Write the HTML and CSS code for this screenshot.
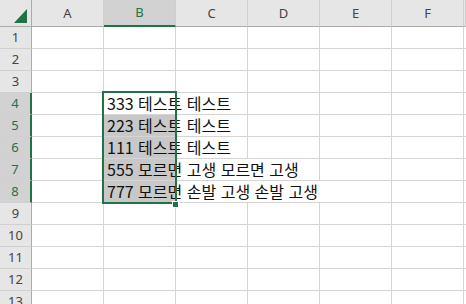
FILE: index.html
```html
<!DOCTYPE html>
<html lang="ko">
<head>
  <meta charset="UTF-8">
  <title>Sheet1</title>
  <link rel="stylesheet" href="styles.css">
</head>
<body>
  <div class="sheet">
    <div class="row head">
      <div class="corner">
        <svg width="13" height="14" viewBox="0 0 13 14"><polygon points="13,0 13,14 0,14" fill="#217346"/></svg>
      </div>
      <div class="col">A</div>
      <div class="col active">B</div>
      <div class="col">C</div>
      <div class="col">D</div>
      <div class="col">E</div>
      <div class="col">F</div>
      <div class="col"></div>
    </div>

    <div class="row">
      <div class="num">1</div>
      <div class="cell"></div><div class="cell"></div><div class="cell"></div><div class="cell"></div><div class="cell"></div><div class="cell"></div><div class="cell"></div>
    </div>
    <div class="row">
      <div class="num">2</div>
      <div class="cell"></div><div class="cell"></div><div class="cell"></div><div class="cell"></div><div class="cell"></div><div class="cell"></div><div class="cell"></div>
    </div>
    <div class="row">
      <div class="num">3</div>
      <div class="cell"></div><div class="cell"></div><div class="cell"></div><div class="cell"></div><div class="cell"></div><div class="cell"></div><div class="cell"></div>
    </div>
    <div class="row">
      <div class="num active">4</div>
      <div class="cell"></div>
      <div class="cell span-2">333 테스트 테스트</div>
      <div class="cell"></div><div class="cell"></div><div class="cell"></div><div class="cell"></div>
    </div>
    <div class="row">
      <div class="num active">5</div>
      <div class="cell"></div>
      <div class="cell span-2 sel">223 테스트 테스트</div>
      <div class="cell"></div><div class="cell"></div><div class="cell"></div><div class="cell"></div>
    </div>
    <div class="row">
      <div class="num active">6</div>
      <div class="cell"></div>
      <div class="cell span-2 sel">111 테스트 테스트</div>
      <div class="cell"></div><div class="cell"></div><div class="cell"></div><div class="cell"></div>
    </div>
    <div class="row">
      <div class="num active">7</div>
      <div class="cell"></div>
      <div class="cell span-3 sel">555 모르면 고생 모르면 고생</div>
      <div class="cell"></div><div class="cell"></div><div class="cell"></div>
    </div>
    <div class="row">
      <div class="num active">8</div>
      <div class="cell"></div>
      <div class="cell span-4 sel">777 모르면 손발 고생 손발 고생</div>
      <div class="cell"></div><div class="cell"></div>
    </div>
    <div class="row">
      <div class="num">9</div>
      <div class="cell"></div><div class="cell"></div><div class="cell"></div><div class="cell"></div><div class="cell"></div><div class="cell"></div><div class="cell"></div>
    </div>
    <div class="row">
      <div class="num">10</div>
      <div class="cell"></div><div class="cell"></div><div class="cell"></div><div class="cell"></div><div class="cell"></div><div class="cell"></div><div class="cell"></div>
    </div>
    <div class="row">
      <div class="num">11</div>
      <div class="cell"></div><div class="cell"></div><div class="cell"></div><div class="cell"></div><div class="cell"></div><div class="cell"></div><div class="cell"></div>
    </div>
    <div class="row">
      <div class="num">12</div>
      <div class="cell"></div><div class="cell"></div><div class="cell"></div><div class="cell"></div><div class="cell"></div><div class="cell"></div><div class="cell"></div>
    </div>
    <div class="row">
      <div class="num">13</div>
      <div class="cell"></div><div class="cell"></div><div class="cell"></div><div class="cell"></div><div class="cell"></div><div class="cell"></div><div class="cell"></div>
    </div>

    <!-- B4:B8 selection frame -->
    <div class="selection"><span class="handle"></span></div>
  </div>
</body>
</html>
```

FILE: styles.css
```css
* { box-sizing: border-box; }
html, body { overflow: hidden; }
body { margin: 0; background: #fff; font-family: 'Noto Sans', sans-serif; color: #000; }

.sheet { position: relative; }

.row {
  display: grid;
  grid-template-columns: 32px repeat(6, 72px) 1fr;
  height: 22px;
}
.row.head { height: 27px; }

.corner {
  background: #e6e6e6;
  border-right: 1px solid #ababab;
  border-bottom: 1px solid #ababab;
  display: flex;
  align-items: flex-end;
  justify-content: flex-end;
  padding: 0 4px 3px 0;
}
.corner svg { display: block; }

.col {
  background: #e6e6e6;
  border-right: 1px solid #d0d0d0;
  border-bottom: 1px solid #ababab;
  text-align: center;
  font-size: 13px;
  line-height: 26px;
  color: #444;
}
.col.active {
  background: #d2d2d2;
  color: #217346;
  border-bottom: 2px solid #217346;
  line-height: 25px;
}

.num {
  background: #e6e6e6;
  border-right: 1px solid #ababab;
  border-bottom: 1px solid #d0d0d0;
  text-align: center;
  font-size: 13px;
  line-height: 21px;
  color: #444;
}
.num.active {
  background: #d2d2d2;
  color: #217346;
  border-right: 2px solid #217346;
}

.cell {
  border-right: 1px solid #d4d4d4;
  border-bottom: 1px solid #d4d4d4;
  padding-left: 3px;
  font: 16px/21px 'Noto Sans CJK KR', sans-serif;
  white-space: nowrap;
  color: #111;
}
.span-2 { grid-column: span 2; }
.span-3 { grid-column: span 3; }
.span-4 { grid-column: span 4; }
.sel { background: linear-gradient(to right, #c8c8c8 71px, transparent 71px); }

.selection {
  position: absolute;
  left: 102px;
  top: 91px;
  width: 75px;
  height: 113px;
  border: 2px solid #217346;
  pointer-events: none;
}
.handle {
  position: absolute;
  left: 68px;
  top: 108px;
  width: 7px;
  height: 7px;
  background: #217346;
  border: 1px solid #fff;
}
```
